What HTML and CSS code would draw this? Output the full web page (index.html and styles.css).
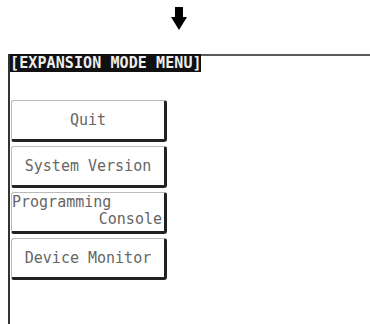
FILE: index.html
```html
<!DOCTYPE html>
<html lang="en">

<head>
    <meta charset="UTF-8">
    <link rel="stylesheet" href="styles.css">
    <title>Expansion Mode Menu</title>
</head>

<body>
    <div class="arrow-row">
        <svg class="arrow" width="16" height="23" viewBox="0 0 16 23">
            <path d="M4 0 H12 V10 H16 L8 23 L0 10 H4 Z" fill="#000" />
        </svg>
    </div>

    <div class="screen">
        <div class="title-row">
            <div class="title">[EXPANSION MODE MENU]</div>
            <div class="title-rule"></div>
        </div>

        <div class="menu">
            <div class="btn">Quit</div>
            <div class="btn">System Version</div>
            <div class="btn btn-two">
                <span class="line1">Programming</span>
                <span class="line2">Console</span>
            </div>
            <div class="btn">Device Monitor</div>
        </div>
    </div>
</body>

</html>
```

FILE: styles.css
```css
@charset "UTF-8";

/* ========BASIC======== */
html,
body {
    margin: 0;
    padding: 0;
    background: #fff;
}

body {
    width: 370px;
    height: 324px;
    overflow: hidden;
    font-family: "DejaVu Sans Mono", "Liberation Mono", monospace;
    font-size: 15px;
    color: #666;
}

/* ========ARROW======== */
.arrow-row {
    height: 47px;
    padding: 7px 0 0 171px;
}

.arrow {
    display: block;
}

/* ========SCREEN======== */
.screen {
    margin-left: 8px;
    height: 270px;
    border-left: 2px solid #333;
}

.title-row {
    display: flex;
    align-items: flex-start;
}

.title {
    width: 191px;
    height: 18px;
    line-height: 18px;
    background: #111;
    color: #eee;
    font-weight: bold;
    white-space: nowrap;
    overflow: hidden;
    letter-spacing: 0.1px;
}

.title-rule {
    flex: 1;
    border-top: 2px solid #5a5a5a;
}

/* ========MENU======== */
.menu {
    display: flex;
    flex-direction: column;
    gap: 4px;
    padding: 28px 0 0 1px;
}

.btn {
    box-sizing: border-box;
    width: 156px;
    height: 42px;
    display: flex;
    align-items: center;
    justify-content: center;
    border-top: 1px solid #bbb;
    border-left: 1px solid #bbb;
    border-right: 3px solid #222;
    border-bottom: 3px solid #222;
    border-radius: 3px;
    white-space: nowrap;
}

.btn-two {
    flex-direction: column;
    align-items: stretch;
    justify-content: flex-start;
    padding: 1px 2px 0 0;
    line-height: 17px;
}

.btn-two .line1 {
    text-align: left;
}

.btn-two .line2 {
    text-align: right;
}
```
